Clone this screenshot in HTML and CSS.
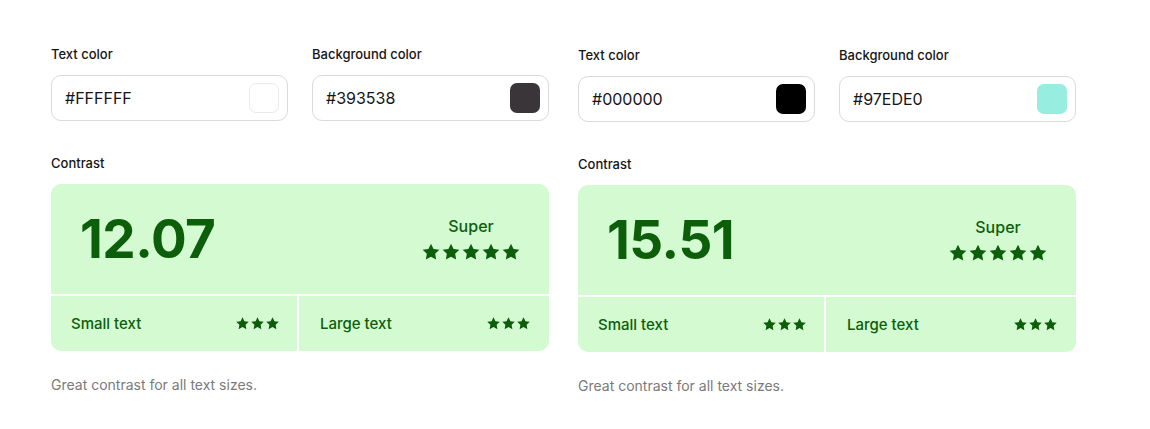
FILE: index.html
```html
<!DOCTYPE html>
<html>
<head>
<meta charset="utf-8">
<link rel="stylesheet" href="styles.css">
</head>
<body>
<svg width="0" height="0" class="defs">
  <defs>
    <path id="star" d="M12 2l3.09 6.26L22 9.27l-5 4.87 1.18 6.88L12 17.77l-6.18 3.25L7 14.14 2 9.27l6.91-1.01L12 2z"/>
  </defs>
</svg>
<div class="page">
  <section class="panel">
    <div class="fields">
      <div class="field">
        <div class="label">Text color</div>
        <div class="input"><span class="hex">#FFFFFF</span><span class="swatch swatch-white"></span></div>
      </div>
      <div class="field">
        <div class="label">Background color</div>
        <div class="input"><span class="hex">#393538</span><span class="swatch swatch-dark"></span></div>
      </div>
    </div>
    <div class="label contrast-label">Contrast</div>
    <div class="card">
      <div class="card-top">
        <div class="ratio">12.07</div>
        <div class="rating">
          <div class="rating-word">Super</div>
          <div class="stars big">
            <svg viewBox="0 0 24 24"><use href="#star"/></svg><svg viewBox="0 0 24 24"><use href="#star"/></svg><svg viewBox="0 0 24 24"><use href="#star"/></svg><svg viewBox="0 0 24 24"><use href="#star"/></svg><svg viewBox="0 0 24 24"><use href="#star"/></svg>
          </div>
        </div>
      </div>
      <div class="card-bottom">
        <div class="cell"><span>Small text</span><div class="stars small"><svg viewBox="0 0 24 24"><use href="#star"/></svg><svg viewBox="0 0 24 24"><use href="#star"/></svg><svg viewBox="0 0 24 24"><use href="#star"/></svg></div></div>
        <div class="cell"><span>Large text</span><div class="stars small"><svg viewBox="0 0 24 24"><use href="#star"/></svg><svg viewBox="0 0 24 24"><use href="#star"/></svg><svg viewBox="0 0 24 24"><use href="#star"/></svg></div></div>
      </div>
    </div>
    <p class="desc">Great contrast for all text sizes.</p>
  </section>

  <section class="panel panel-second">
    <div class="fields">
      <div class="field">
        <div class="label">Text color</div>
        <div class="input"><span class="hex">#000000</span><span class="swatch swatch-black"></span></div>
      </div>
      <div class="field">
        <div class="label">Background color</div>
        <div class="input"><span class="hex">#97EDE0</span><span class="swatch swatch-mint"></span></div>
      </div>
    </div>
    <div class="label contrast-label">Contrast</div>
    <div class="card">
      <div class="card-top">
        <div class="ratio">15.51</div>
        <div class="rating">
          <div class="rating-word">Super</div>
          <div class="stars big">
            <svg viewBox="0 0 24 24"><use href="#star"/></svg><svg viewBox="0 0 24 24"><use href="#star"/></svg><svg viewBox="0 0 24 24"><use href="#star"/></svg><svg viewBox="0 0 24 24"><use href="#star"/></svg><svg viewBox="0 0 24 24"><use href="#star"/></svg>
          </div>
        </div>
      </div>
      <div class="card-bottom">
        <div class="cell"><span>Small text</span><div class="stars small"><svg viewBox="0 0 24 24"><use href="#star"/></svg><svg viewBox="0 0 24 24"><use href="#star"/></svg><svg viewBox="0 0 24 24"><use href="#star"/></svg></div></div>
        <div class="cell"><span>Large text</span><div class="stars small"><svg viewBox="0 0 24 24"><use href="#star"/></svg><svg viewBox="0 0 24 24"><use href="#star"/></svg><svg viewBox="0 0 24 24"><use href="#star"/></svg></div></div>
      </div>
    </div>
    <p class="desc">Great contrast for all text sizes.</p>
  </section>
</div>
</body>
</html>
```

FILE: styles.css
```css
* { box-sizing: border-box; }
html, body { margin: 0; padding: 0; background: #fff; }
body { font-family: Inter, "Noto Sans", sans-serif; color: #111; }
.defs { position: absolute; width: 0; height: 0; }

.page {
  display: flex;
  gap: 29px;
  padding: 46px 0 0 51px;
}
.panel { width: 498px; display: flex; flex-direction: column; }
.panel-second { margin-top: 1px; }

.fields { display: flex; gap: 24px; }
.field { flex: 1; }

.label {
  font-size: 13px;
  line-height: 16px;
  font-weight: 500;
  color: #151515;
  margin-bottom: 13px;
}
.contrast-label { margin-top: 34px; }

.input {
  height: 46px;
  border: 1px solid #dadada;
  border-radius: 10px;
  display: flex;
  align-items: center;
  justify-content: space-between;
  padding: 0 8px 0 13px;
}
.hex { font-size: 16px; color: #151515; }
.swatch { width: 30px; height: 30px; border-radius: 7px; }
.swatch-white { background: #fff; border: 1px solid #eaeaea; }
.swatch-dark { background: #393538; }
.swatch-black { background: #000; }
.swatch-mint { background: #97ede0; }

.card {
  background: #d3fad1;
  border-radius: 10px;
  overflow: hidden;
  color: #0c5e0a;
}
.card-top {
  height: 112px;
  display: flex;
  align-items: center;
  justify-content: space-between;
  padding: 0 28px 0 29px;
  border-bottom: 2px solid #fff;
}
.ratio {
  font-size: 53px;
  font-weight: 700;
  letter-spacing: -0.5px;
}
.rating { display: flex; flex-direction: column; align-items: center; }
.rating-word { font-size: 16px; font-weight: 500; line-height: 20px; margin-bottom: 6px; }

.stars { display: flex; }
.stars svg { fill: #0c5e0a; display: block; }
.stars.big svg { width: 20px; height: 20px; }
.stars.small svg { width: 15px; height: 15px; }

.card-bottom { display: flex; height: 55px; }
.cell {
  flex: 1;
  display: flex;
  align-items: center;
  justify-content: space-between;
  padding: 0 18px 0 20px;
  font-size: 15px;
  font-weight: 500;
}
.cell:first-child { flex: 0 0 246px; padding-right: 17px; }
.cell + .cell { border-left: 2px solid #fff; padding-left: 21px; }

.desc {
  margin: 24px 0 0;
  font-size: 14px;
  line-height: 20px;
  color: #7a7a7a;
}
```
